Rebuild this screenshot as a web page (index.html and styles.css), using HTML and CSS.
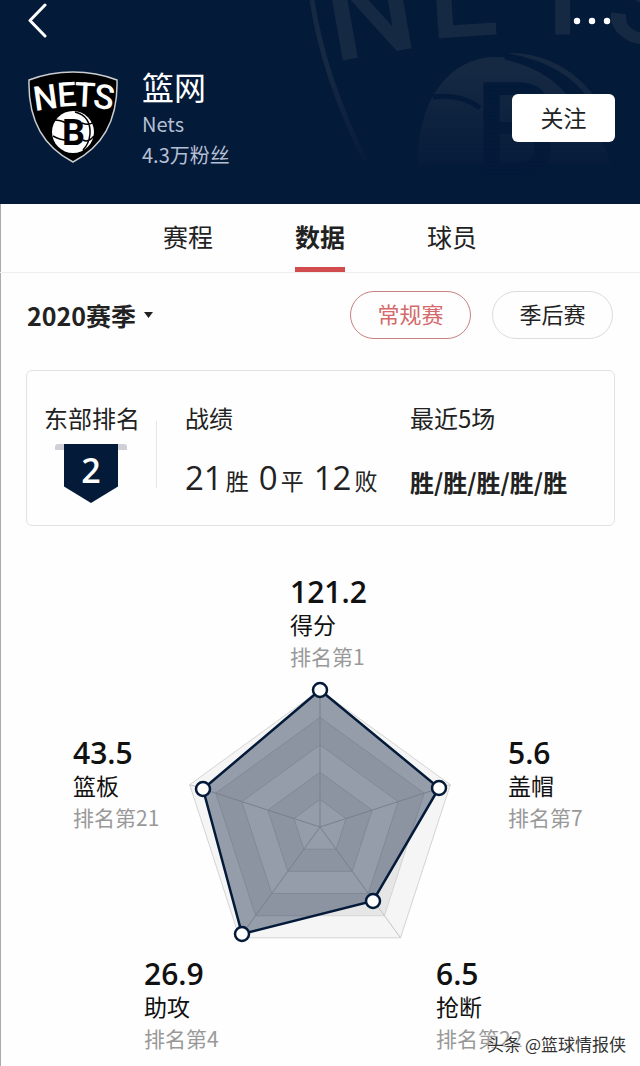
FILE: index.html
```
<!DOCTYPE html>
<html lang="zh-CN">
<head>
    <meta charset="utf-8">
    <meta name="viewport" content="width=device-width, initial-scale=1">
    <title>篮网</title>
    <link rel="stylesheet" href="styles.css">
</head>
<body>
    <header class="header">
        <svg class="header-art" width="340" height="204" viewBox="0 0 340 204" aria-hidden="true">
            <defs>
                <linearGradient id="fade" x1="0" y1="0" x2="0" y2="1">
                    <stop offset="0.35" stop-color="#fff"/>
                    <stop offset="0.88" stop-color="#000"/>
                </linearGradient>
                <mask id="fadeMask"><rect width="340" height="204" fill="url(#fade)"/></mask>
            </defs>
            <g mask="url(#fadeMask)">
                <g class="art-letters">
                    <text transform="translate(34 62) rotate(-10)">N</text>
                    <text transform="translate(130 39) rotate(-4)">E</text>
                    <text transform="translate(225 34)">T</text>
                    <text transform="translate(303 38) rotate(8)">S</text>
                </g>
                <path d="M12 0 Q24 78 65 160" fill="none" stroke="#162943" stroke-width="5"/>
                <path d="M118 164C116 101 150 57 195 57C241 57 286 92 311 164Z" fill="#162943"/>
                <path d="M207 53Q273 52 310 120L291 103Q268 64 207 53Z" fill="#162943"/>
                <path d="M133 97Q160 93 180 108M205 57Q255 68 278 106" fill="none" stroke="#041a39" stroke-width="5"/>
                <text class="art-b" x="174" y="176">B</text>
            </g>
        </svg>

        <div class="header-bar">
            <button class="icon-btn" aria-label="返回">
                <svg width="20" height="36" viewBox="0 0 20 36"><path d="M17 3L2 18.500L17 34" fill="none" stroke="#fff" stroke-width="3" stroke-linecap="round" stroke-linejoin="round"/></svg>
            </button>
            <button class="icon-btn" aria-label="更多">
                <svg width="40" height="36" viewBox="0 0 40 36" fill="#fff"><circle cx="4" cy="19" r="3.200"/><circle cx="19" cy="19" r="3.200"/><circle cx="34" cy="19" r="3.200"/></svg>
            </button>
        </div>

        <div class="team">
            <svg class="team-logo" width="92" height="94" viewBox="0 0 92 94" role="img" aria-label="Nets">
                <path d="M46 2C62 2 77 5 90 10C91 46 79 75 46 92C13 75 1 46 2 10C15 5 30 2 46 2Z" fill="#000" stroke="#c9ccd1" stroke-width="1.500"/>
                <g class="logo-letters">
                    <text transform="translate(8 41) rotate(-8)">N</text>
                    <text transform="translate(31 37) rotate(-4)">E</text>
                    <text transform="translate(47 36) rotate(3)">T</text>
                    <text transform="translate(65 37) rotate(9)">S</text>
                </g>
                <circle cx="46" cy="62" r="21" fill="#fff"/>
                <g fill="none" stroke="#000" stroke-width="1.500">
                    <path d="M27 50Q34 50 39 53M26 66Q33 70 39 70M55 53Q62 56 67 52M56 70Q61 73 67 66M48 42Q64 46 63 64Q62 74 56 80"/>
                </g>
                <text class="logo-b" x="35" y="75">B</text>
            </svg>
            <div class="team-info">
                <h1>篮网</h1>
                <p>Nets</p>
                <p>4.3万粉丝</p>
            </div>
            <button class="follow-btn">关注</button>
        </div>
    </header>

    <main>
        <nav class="tabs">
            <a href="#schedule">赛程</a>
            <a href="#data" class="active">数据</a>
            <a href="#players">球员</a>
        </nav>

        <div class="filters">
            <div class="season">
                <select id="season" aria-label="赛季">
                    <option>2020赛季</option>
                </select>
                <svg width="10" height="8" viewBox="0 0 10 8"><path d="M0 1H9L4.500 7Z" fill="#222"/></svg>
            </div>
            <button class="chip active">常规赛</button>
            <button class="chip">季后赛</button>
        </div>

        <section class="card">
            <div class="rank">
                <div class="card-title">东部排名</div>
                <div class="banner"><span>2</span></div>
            </div>
            <div class="record">
                <div class="card-title">战绩</div>
                <div class="record-value">
                    <span><b>21</b>胜</span>
                    <span><b>0</b>平</span>
                    <span><b>12</b>败</span>
                </div>
            </div>
            <div class="recent">
                <div class="card-title">最近5场</div>
                <div class="recent-value">胜/胜/胜/胜/胜</div>
            </div>
        </section>

        <section class="radar">
            <div class="stat">
                <div class="stat-value">121.2</div>
                <div class="stat-name">得分</div>
                <div class="stat-rank">排名第1</div>
            </div>
            <div class="radar-row">
                <div class="stat">
                    <div class="stat-value">43.5</div>
                    <div class="stat-name">篮板</div>
                    <div class="stat-rank">排名第21</div>
                </div>
                <svg class="radar-chart" width="280" height="268" viewBox="-140 -146 280 268" aria-hidden="true">
                    <g stroke="#d4d4d4" stroke-width="1">
                        <polygon fill="#f5f5f5" points="0,-137 130.300,-42.300 80.500,110.800 -80.500,110.800 -130.300,-42.300"/>
                        <polygon fill="#e6e6e6" points="0,-109.600 104.200,-33.900 64.400,88.700 -64.400,88.700 -104.200,-33.900"/>
                        <polygon fill="#f5f5f5" points="0,-82.200 78.200,-25.400 48.300,66.500 -48.300,66.500 -78.200,-25.400"/>
                        <polygon fill="#e6e6e6" points="0,-54.800 52.100,-16.900 32.200,44.300 -32.200,44.300 -52.100,-16.900"/>
                        <polygon fill="#f5f5f5" points="0,-27.400 26.100,-8.500 16.100,22.200 -16.100,22.200 -26.100,-8.500"/>
                        <path stroke="#c4c4c4" d="M0 0V-137M0 0L130.300 -42.300M0 0L80.500 110.800M0 0L-80.500 110.800M0 0L-130.300 -42.300"/>
                    </g>
                    <polygon points="0,-137 119,-39 53,74 -78,107 -117,-38" fill="#041a39" fill-opacity="0.400" stroke="#041a39" stroke-width="2.500"/>
                    <g fill="#fff" stroke="#041a39" stroke-width="2.500">
                        <circle cx="0" cy="-137" r="7"/>
                        <circle cx="119" cy="-39" r="7"/>
                        <circle cx="53" cy="74" r="7"/>
                        <circle cx="-78" cy="107" r="7"/>
                        <circle cx="-117" cy="-38" r="7"/>
                    </g>
                </svg>
                <div class="stat">
                    <div class="stat-value">5.6</div>
                    <div class="stat-name">盖帽</div>
                    <div class="stat-rank">排名第7</div>
                </div>
            </div>
            <div class="radar-bottom">
                <div class="stat">
                    <div class="stat-value">26.9</div>
                    <div class="stat-name">助攻</div>
                    <div class="stat-rank">排名第4</div>
                </div>
                <div class="stat">
                    <div class="stat-value">6.5</div>
                    <div class="stat-name">抢断</div>
                    <div class="stat-rank">排名第22</div>
                </div>
            </div>
            <div class="source">头条 @篮球情报侠</div>
        </section>
    </main>
</body>
</html>
```
FILE: styles.css
```
* {
    margin: 0;
    padding: 0;
    box-sizing: border-box;
}

body {
    font-family: "Noto Sans CJK SC", sans-serif;
    background: #fefefe;
    color: #222;
}

button {
    font-family: inherit;
    border: none;
    background: none;
    cursor: pointer;
}

svg {
    display: block;
}

/* header */
.header {
    position: relative;
    height: 204px;
    background: #041a39;
    color: #fff;
    overflow: hidden;
}

.header-art {
    position: absolute;
    top: 0;
    right: 0;
}

.art-letters {
    font-family: Roboto, sans-serif;
    font-size: 124px;
    font-weight: 500;
    fill: #162943;
}

.art-b {
    font-family: Roboto, sans-serif;
    font-size: 132px;
    font-weight: 500;
    fill: #041a39;
}

.header-bar {
    position: relative;
    display: flex;
    justify-content: space-between;
    padding: 2px 27px 0 28px;
}

.team {
    position: relative;
    display: flex;
    align-items: flex-start;
    padding: 32px 25px 0 27px;
}

.team-info {
    flex: 1;
    margin-left: 23px;
}

.logo-letters {
    font-family: Roboto, sans-serif;
    font-size: 34px;
    font-weight: 500;
    fill: #fff;
}

.logo-b {
    font-family: Roboto, sans-serif;
    font-size: 36px;
    font-weight: 700;
    fill: #000;
}

.team-info h1 {
    font-size: 32px;
    font-weight: 400;
    line-height: 32px;
    margin-bottom: 6px;
}

.team-info p {
    font-size: 20px;
    line-height: 31px;
    color: #b4bfd3;
}

.follow-btn {
    width: 103px;
    height: 48px;
    margin-top: 24px;
    padding-bottom: 2px;
    border-radius: 6px;
    background: #fff;
    color: #222;
    font-size: 23px;
}

/* tabs */
main {
    box-shadow: inset 1px 0 #aaa;
}

.tabs {
    display: flex;
    justify-content: center;
    gap: 82px;
    height: 69px;
    border-bottom: 1px solid #eee;
}

.tabs a {
    font-size: 25px;
    line-height: 64px;
    height: 68px;
    color: #222;
    text-decoration: none;
}

.tabs .active {
    font-weight: 700;
    border-bottom: 5px solid #d04c4f;
}

.filters {
    display: flex;
    align-items: center;
    gap: 21px;
    padding: 18px 27px 0;
}

.season {
    display: flex;
    align-items: center;
    gap: 7px;
    margin-right: auto;
}

.season select {
    appearance: none;
    border: none;
    background: none;
    color: #222;
    font: 700 25px/36px "Noto Sans CJK SC", sans-serif;
}

.chip {
    width: 121px;
    height: 48px;
    padding-bottom: 4px;
    border: 1px solid #ddd;
    border-radius: 24px;
    font-size: 22px;
    color: #222;
}

.chip.active {
    border-color: #c98080;
    color: #d46a6c;
}

/* ranking card */
.card {
    display: flex;
    margin: 31px 25px 0 26px;
    height: 156px;
    padding: 31px 17px 0;
    border: 1px solid #e2e2e2;
    border-radius: 6px;
}

.card-title {
    font-size: 24px;
    line-height: 32px;
    white-space: nowrap;
}

.rank {
    position: relative;
    width: 113px;
    margin-right: 28px;
}

.rank::after {
    content: "";
    position: absolute;
    top: 19px;
    right: 0;
    width: 1px;
    height: 67px;
    background: #e6e6e6;
}

.banner {
    width: 72px;
    height: 59px;
    margin: 10px 0 0 11px;
    background: linear-gradient(#cfd1d6, #cfd1d6) 0 0 / 100% 6px no-repeat;
    border-radius: 3px;
}

.banner span {
    display: block;
    width: 54px;
    height: 59px;
    margin: 0 auto;
    background: #041a39;
    clip-path: polygon(0 0, 100% 0, 100% 72%, 50% 100%, 0 72%);
    color: #fff;
    font: 600 34px/52px "Open Sans", sans-serif;
    text-align: center;
}

.record {
    width: 225px;
}

.record-value {
    display: flex;
    gap: 10px;
    margin-top: 20px;
    font-size: 23px;
    line-height: 48px;
    white-space: nowrap;
}

.record-value b {
    font-family: "Open Sans", sans-serif;
    font-size: 33px;
    font-weight: 500;
    margin-right: 3px;
}

.recent-value {
    margin-top: 24px;
    font-size: 24px;
    font-weight: 700;
    line-height: 48px;
    white-space: nowrap;
}

/* radar */
.radar {
    position: relative;
    display: flex;
    flex-direction: column;
    align-items: center;
    padding: 50px 0 12px;
}

.stat {
    width: 98px;
}

.stat-value {
    font: 600 30px/32px "Open Sans", sans-serif;
    color: #111;
}

.stat-name {
    font-size: 23px;
    line-height: 32px;
    color: #111;
}

.stat-rank {
    font-size: 21px;
    line-height: 32px;
    color: #999;
}

.radar > .stat {
    width: 60px;
    white-space: nowrap;
}

.radar-row {
    display: flex;
    justify-content: center;
    width: 100%;
    margin-top: 9px;
}

.radar-row .stat {
    margin-top: 56px;
}

.radar-row .stat:first-child {
    margin-right: 9px;
}

.radar-row .stat:last-child {
    margin-left: 48px;
    margin-right: -39px;
}

.radar-bottom {
    display: flex;
    gap: 194px;
    margin: 9px 0 0 38px;
}

.source {
    position: absolute;
    right: 14px;
    bottom: 10px;
    font-size: 17px;
    line-height: 24px;
    color: #333;
    text-shadow: 0 0 2px #fff, 1px 1px 1px #fff;
}
```
